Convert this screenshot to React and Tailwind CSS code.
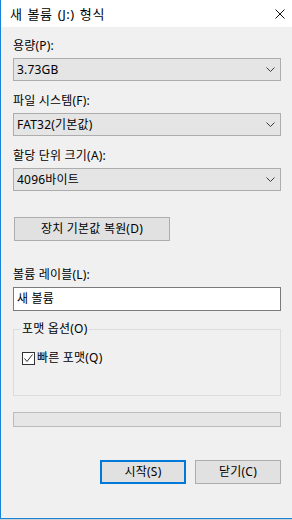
import React from 'react';

const font = "font-['Segoe_UI','Noto_Sans','Noto_Sans_CJK_KR',sans-serif]";

const Chevron = () => (
  <svg width="9" height="5" viewBox="0 0 9 5" className="shrink-0">
    <path d="M0.5 0.5 L4.5 4.5 L8.5 0.5" fill="none" stroke="#3c3c3c" strokeWidth="1" />
  </svg>
);

const Label = ({ children, className = '' }) => (
  <div className={`h-4 leading-4 text-[12px] tracking-[0.2px] text-black ${className}`}>{children}</div>
);

const Combo = ({ value }) => (
  <div className="mt-1 flex h-[23px] items-center justify-between border border-[#adadad] bg-[#e5e5e5] pl-[3px] pr-[5px]">
    <span className="leading-4 text-[12px] tracking-[0.2px] text-black">{value}</span>
    <Chevron />
  </div>
);

const Button = ({ children, focused, className = '' }) => (
  <div
    className={`flex h-[24px] items-center justify-center bg-[#e1e1e1] text-[12px] leading-4 tracking-[0.2px] text-black ${
      focused ? 'border-2 border-[#0078d7]' : 'border border-[#adadad]'
    } ${className}`}
  >
    {children}
  </div>
);

export default function App() {
  return (
    <div className={`w-[292px] h-[520px] overflow-hidden bg-[#6b6b6b] ${font}`}>
      <div className="flex h-[519px] flex-col border-b border-l border-[#1883d7] bg-[#f0f0f0]">
        {/* title bar */}
        <div className="flex h-[27px] shrink-0 items-center justify-between bg-white pl-[9px] pr-[7px]">
          <span className="text-[13px] leading-4 tracking-[0.6px] [word-spacing:1px] text-black">새 볼륨 (J:) 형식</span>
          <svg width="10" height="10" viewBox="0 0 10 10">
            <path d="M0.5 0.5 L9.5 9.5 M9.5 0.5 L0.5 9.5" stroke="#111" strokeWidth="1" />
          </svg>
        </div>

        <div className="flex flex-1 flex-col pl-[12px] pr-[11px] pt-[11px]">
          <Label>용량(P):</Label>
          <Combo value="3.73GB" />

          <Label className="mt-[12px]">파일 시스템(F):</Label>
          <Combo value="FAT32(기본값)" />

          <Label className="mt-[12px]">할당 단위 크기(A):</Label>
          <Combo value="4096바이트" />

          <Button className="ml-[1px] mt-[26px] w-[156px]">장치 기본값 복원(D)</Button>

          <Label className="mt-[26px]">볼륨 레이블(L):</Label>
          <div className="mt-1 flex h-[24px] items-center border border-[#7a7a7a] bg-white pl-[3px]">
            <span className="text-[12px] leading-4 tracking-[0.2px] text-black">새 볼륨</span>
          </div>

          <fieldset className="mt-[10px] h-[75px] border border-[#dcdcdc] px-[8px]">
            <legend className="-ml-[2px] px-[2px] text-[12px] leading-4 tracking-[0.2px] text-black">포맷 옵션(O)</legend>
            <div className="mt-[13px] flex h-4 items-center gap-[2px]">
              <div className="flex h-[13px] w-[13px] items-center justify-center border border-[#333] bg-white">
                <svg width="11" height="11" viewBox="0 0 11 11">
                  <path d="M1.5 5.5 L4 8.5 L9.5 1.5" fill="none" stroke="#333" strokeWidth="1" />
                </svg>
              </div>
              <span className="text-[12px] leading-4 tracking-[0.2px] text-black">빠른 포맷(Q)</span>
            </div>
          </fieldset>

          <div className="mt-[16px] h-[15px] border border-[#bcbcbc] bg-[#e6e6e6]" />

          <div className="mt-[33px] flex justify-end gap-[9px]">
            <Button focused className="w-[86px]">시작(S)</Button>
            <Button className="w-[86px]">닫기(C)</Button>
          </div>
        </div>
      </div>
      <div className="h-px bg-[#cfcfcf]" />
    </div>
  );
}
